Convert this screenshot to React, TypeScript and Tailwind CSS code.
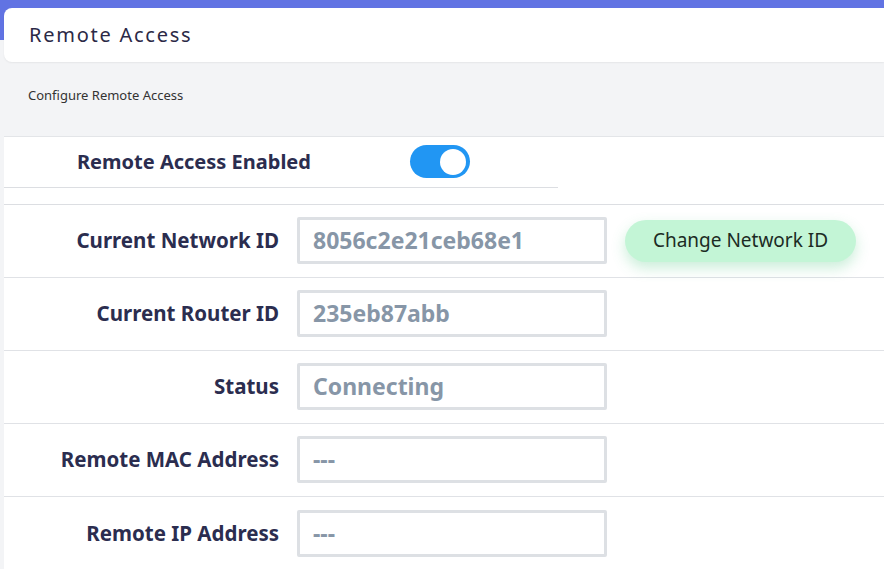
export default function App() {
  const rows = [
    { label: "Current Network ID", value: "8056c2e21ceb68e1", action: true },
    { label: "Current Router ID", value: "235eb87abb" },
    { label: "Status", value: "Connecting" },
    { label: "Remote MAC Address", value: "---" },
    { label: "Remote IP Address", value: "---" },
  ];

  return (
    <div className="relative min-h-[569px] w-[884px] overflow-hidden bg-[#f3f4f6] font-['Noto_Sans',sans-serif]">
      {/* top band */}
      <div className="absolute inset-x-0 top-0 h-[40px] bg-[#6173e3]" />

      <div className="relative pt-[8px] pl-[4px]">
        <div className="flex h-[54px] items-center rounded-l-[8px] bg-white pl-[25px] shadow-[0_1px_2px_rgba(0,0,0,0.06)]">
          <h1 className="text-[20px] tracking-[1.75px] text-[#2b2946]">Remote Access</h1>
        </div>

        <p className="pl-[24px] pt-[24px] pb-[30px] text-[13px] text-[#333]">Configure Remote Access</p>

        <section className="border-t border-[#e3e5e8] bg-white">
          <div className="flex h-[51px] w-[554px] items-center border-b border-[#dcdee2]">
            <span className="ml-[73px] text-[20px] font-bold text-[#2b2d4f]">Remote Access Enabled</span>
            <div className="ml-[99px] flex h-[33px] w-[60px] items-center justify-end rounded-full bg-[#2196f3] px-[4px]">
              <div className="h-[26px] w-[26px] rounded-full bg-white" />
            </div>
          </div>
          <div className="h-[17px] border-b border-[#dcdee2]" />

          {rows.map((r, i) => (
            <div
              key={r.label}
              className={`flex h-[73px] items-center ${i < rows.length - 1 ? "border-b border-[#e0e2e6]" : ""}`}
            >
              <div className="w-[275px] text-right text-[20.5px] font-bold text-[#2b2d4f]">{r.label}</div>
              <div className="ml-[18px] flex h-[47px] w-[310px] items-center rounded-[2px] border-[3px] border-[#dde0e4] bg-white pl-[13px] text-[23px] font-bold text-[#8796a7]">
                {r.value}
              </div>
              {r.action && (
                <button className="ml-[18px] h-[42px] w-[231px] rounded-full bg-[#c3f5d6] text-[19px] text-[#1c2b24] shadow-[0_6px_14px_rgba(80,200,130,0.3)]">
                  Change Network ID
                </button>
              )}
            </div>
          ))}
        </section>
      </div>
    </div>
  );
}
